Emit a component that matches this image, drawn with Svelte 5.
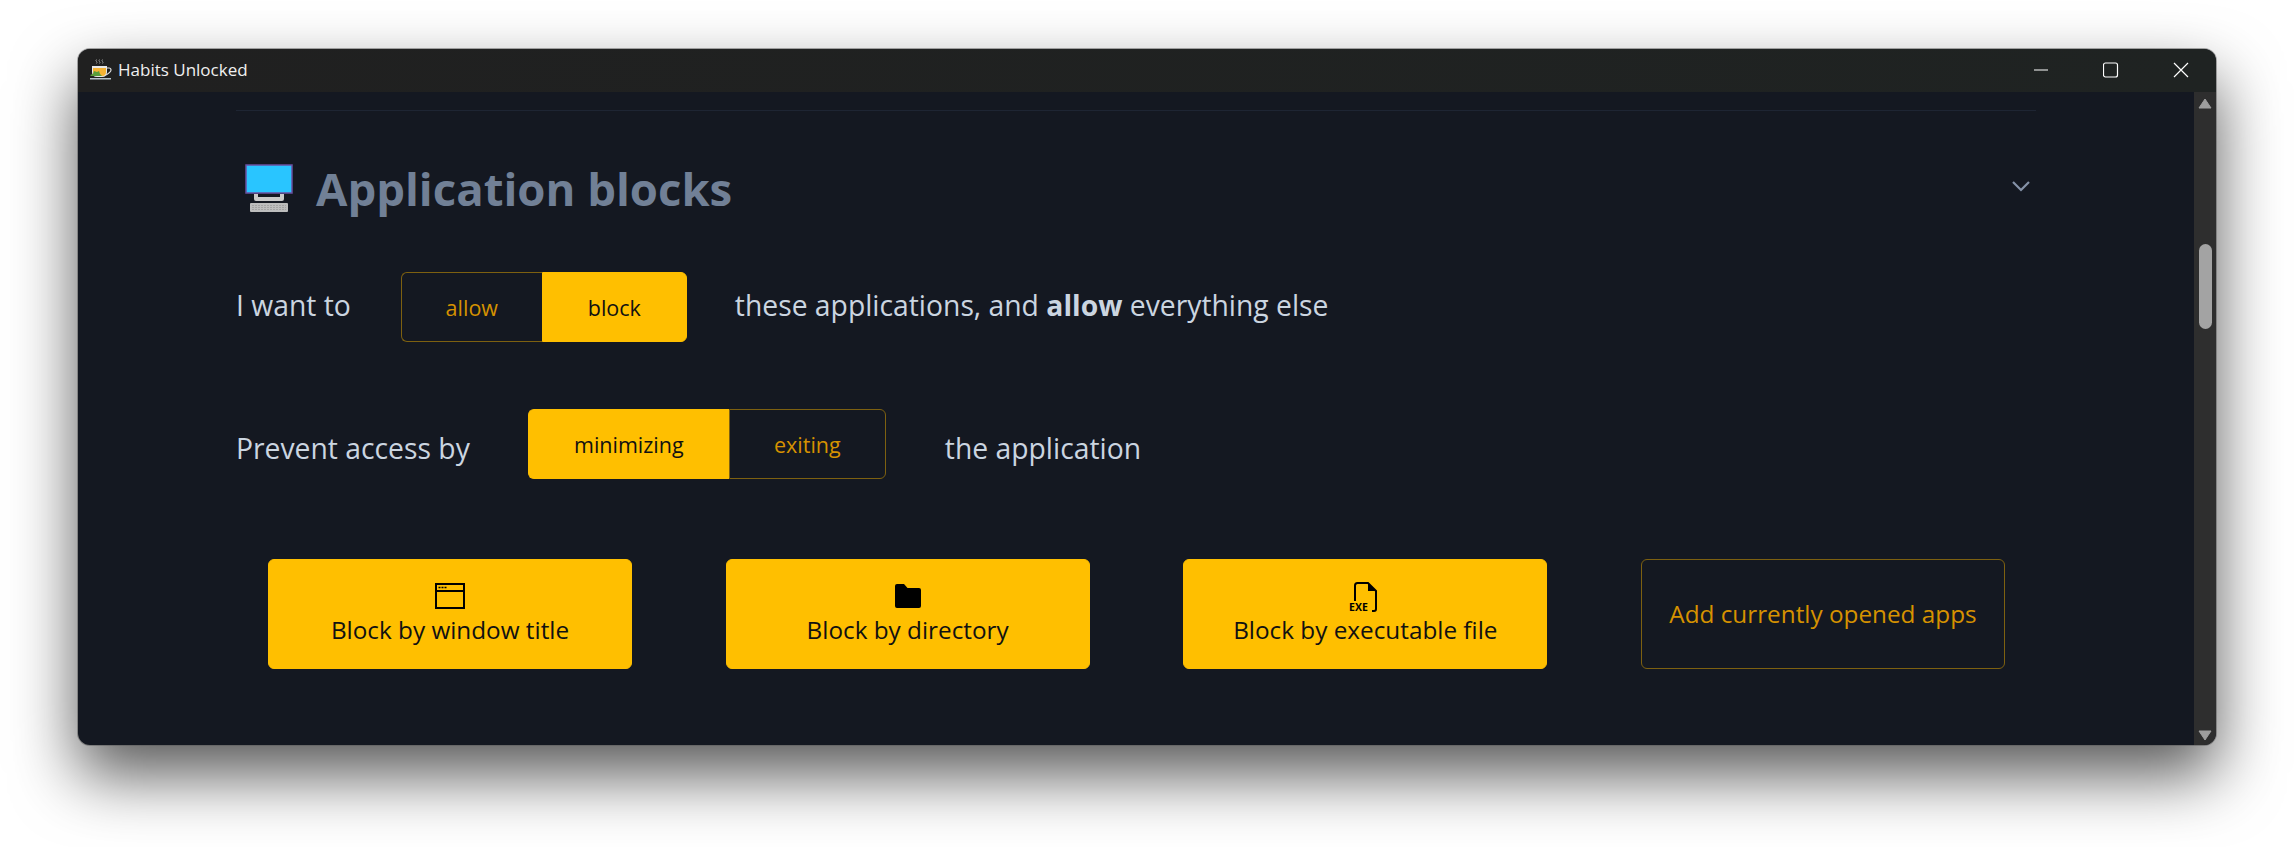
<script>
  let mode = $state('block');
  let prevent = $state('minimizing');

  const actions = [
    { label: 'Block by window title', icon: 'window' },
    { label: 'Block by directory', icon: 'folder' },
    { label: 'Block by executable file', icon: 'exe' }
  ];
</script>

<div class="page">
  <div class="window">
    <header class="titlebar">
      <div class="app-title">
        <svg class="cup" width="24" height="24" viewBox="0 0 24 24">
          <path d="M7.500 1.500q-1 1 0 2t0 2M10.500 1.500q-1 1 0 2t0 2M13.500 1.500q-1 1 0 2t0 2" fill="none" stroke="#aaa" stroke-width="0.8" />
          <path d="M3 8h15v6q0 5-5 5H8q-5 0-5-5z" fill="#e8e8e8" />
          <path d="M4 10h13v4q0 4-4 4H8q-4 0-4-4z" fill="#f5b335" />
          <path d="M18 10h2q2 0 2 2t-5 5" fill="none" stroke="#ddd" stroke-width="1.200" />
          <path d="M1 17l3-1 1-3 3 1 2-1 1 3 2 2H2z" fill="#5a9e3a" />
          <rect x="1" y="20" width="21" height="1.500" fill="#b8c4cc" />
        </svg>
        <span>Habits Unlocked</span>
      </div>
      <div class="controls">
        <button class="ctl" aria-label="Minimize">
          <svg width="16" height="16" viewBox="0 0 16 16"><path d="M1 8h14" stroke="#fff" stroke-width="1.200" /></svg>
        </button>
        <button class="ctl" aria-label="Maximize">
          <svg width="16" height="16" viewBox="0 0 16 16"><rect x="0.500" y="1" width="14" height="14" rx="2" fill="none" stroke="#fff" stroke-width="1.200" /></svg>
        </button>
        <button class="ctl" aria-label="Close">
          <svg width="16" height="16" viewBox="0 0 16 16"><path d="M1 1l14 14M15 1L1 15" stroke="#fff" stroke-width="1.200" /></svg>
        </button>
      </div>
    </header>

    <div class="body">
      <main class="content">
        <div class="inner">
          <hr />
          <div class="section-head">
            <h2>
              <svg class="pc" width="50" height="52" viewBox="0 0 50 52">
                <rect x="2" y="2" width="46" height="28" fill="#29c5ff" stroke="#6a4fa0" stroke-width="1.500" />
                <path d="M10 31v5q0 2 2 2h26q2 0 2-2v-5h-4v3H14v-3z" fill="#c9c9c9" />
                <rect x="6" y="40" width="38" height="9" rx="1" fill="#bdbdbd" />
                <path d="M8 42.500h34M8 44.500h34M8 46.500h34" stroke="#9c9c9c" stroke-width="0.800" stroke-dasharray="2 1" />
              </svg>
              Application blocks
            </h2>
            <svg class="chevron" width="20" height="12" viewBox="0 0 20 12">
              <path d="M2 2l8 8 8-8" fill="none" stroke="#8592a8" stroke-width="2.200" />
            </svg>
          </div>

          <div class="row first">
            <span>I want to</span>
            <div class="toggle">
              <button class="seg w-allow" class:on={mode === 'allow'} onclick={() => (mode = 'allow')}>allow</button>
              <button class="seg w-block" class:on={mode === 'block'} onclick={() => (mode = 'block')}>block</button>
            </div>
            <span>these applications, and <b>allow</b> everything else</span>
          </div>

          <div class="row second">
            <span>Prevent access by</span>
            <div class="toggle">
              <button class="seg w-min" class:on={prevent === 'minimizing'} onclick={() => (prevent = 'minimizing')}>minimizing</button>
              <button class="seg w-exit" class:on={prevent === 'exiting'} onclick={() => (prevent = 'exiting')}>exiting</button>
            </div>
            <span>the application</span>
          </div>

          <div class="actions">
            {#each actions as a}
              <button class="action">
                {#if a.icon === 'window'}
                  <svg width="32" height="32" viewBox="0 0 32 32">
                    <rect x="2" y="3" width="28" height="24" fill="none" stroke="#000" stroke-width="2" />
                    <path d="M2 10h28" stroke="#000" stroke-width="2" />
                    <path d="M4.500 6.500h2M7.500 6.500h2M10.500 6.500h2" stroke="#000" stroke-width="1.500" />
                  </svg>
                {:else if a.icon === 'folder'}
                  <svg width="32" height="32" viewBox="0 0 32 32">
                    <path d="M3 5a2 2 0 0 1 2-2h7l3.500 4H27a2 2 0 0 1 2 2v16a2 2 0 0 1-2 2H5a2 2 0 0 1-2-2z" fill="#000" />
                  </svg>
                {:else}
                  <svg width="32" height="32" viewBox="0 0 32 32">
                    <path d="M6 20V4.500q0-2.500 2.500-2.500H19l8 8v18q0 2-2 2h-2" fill="none" stroke="#000" stroke-width="2" />
                    <path d="M19 2l8 8h-8z" fill="#000" />
                    <text x="9.500" y="30" class="exe" text-anchor="middle">EXE</text>
                  </svg>
                {/if}
                <span>{a.label}</span>
              </button>
            {/each}
            <button class="action outline">Add currently opened apps</button>
          </div>
        </div>
      </main>

      <aside class="scrollbar">
        <svg width="14" height="11" viewBox="0 0 14 11"><path d="M7 1l6 9H1z" fill="#9e9e9e" stroke="#9e9e9e" stroke-linejoin="round" /></svg>
        <div class="track"><div class="thumb"></div></div>
        <svg width="14" height="11" viewBox="0 0 14 11"><path d="M7 10l6-9H1z" fill="#9e9e9e" stroke="#9e9e9e" stroke-linejoin="round" /></svg>
      </aside>
    </div>
  </div>
</div>

<style>
  :global(body) {
    margin: 0;
    background: #fff;
    font-family: "Open Sans", "Noto Sans", sans-serif;
    overflow: hidden;
  }

  .page {
    height: 847px;
    box-sizing: border-box;
    padding: 49px 79px 0 78px;
    overflow: hidden;
  }

  .window {
    height: 696px;
    display: flex;
    flex-direction: column;
    border-radius: 12px;
    overflow: hidden;
    background: #141821;
    box-shadow: 0 0 0 1px rgba(90, 90, 90, 0.5), 0 30px 65px rgba(0, 0, 0, 0.66);
  }

  .titlebar {
    height: 43px;
    flex: none;
    display: flex;
    justify-content: space-between;
    align-items: center;
    background: linear-gradient(90deg, #202020, #1f2322);
  }

  .app-title {
    display: flex;
    align-items: center;
    gap: 5px;
    padding-left: 11px;
    color: #f0f0f0;
    font-size: 17px;
    margin-top: -2px;
  }

  .controls {
    display: flex;
  }

  .ctl {
    width: 70px;
    height: 43px;
    padding: 0 0 2px;
    border: 0;
    background: none;
    display: flex;
    align-items: center;
    justify-content: center;
  }

  .body {
    flex: 1;
    display: flex;
    min-height: 0;
  }

  .content {
    flex: 1;
    padding-left: 158px;
  }

  .inner {
    width: 1800px;
  }

  hr {
    margin: 18px 0 0;
    border: 0;
    border-top: 1px solid #1e2533;
  }

  .section-head {
    display: flex;
    justify-content: space-between;
    align-items: center;
    height: 156px;
    padding: 0 5px 0 8px;
  }

  .chevron {
    margin-bottom: 6px;
  }

  h2 {
    margin: 0 0 3px;
    display: flex;
    align-items: center;
    gap: 22px;
    font-size: 45.5px;
    font-weight: 700;
    color: #718096;
  }

  .pc {
    margin-top: 2px;
  }

  .row {
    display: flex;
    align-items: center;
    color: #cbd5e0;
    font-size: 28.3px;
  }

  .row.first {
    margin-top: 5px;
  }

  .row.first > span {
    margin-bottom: 4px;
  }

  .row.first .toggle {
    margin: 0 48px 0 50px;
  }

  .row.second {
    margin-top: 67px;
  }

  .row.second > span {
    margin-top: 8px;
  }

  .row.second .toggle {
    margin: 0 59px 0 58px;
  }

  .toggle {
    display: flex;
    height: 70px;
  }

  .seg {
    height: 100%;
    padding: 0;
    font: inherit;
    font-size: 21.5px;
    color: #d69200;
    background: transparent;
    border: 1px solid #7d6010;
  }

  .seg:first-child {
    border-radius: 6px 0 0 6px;
    border-right: 0;
  }

  .seg:last-child {
    border-radius: 0 6px 6px 0;
    border-left: 1px solid #7d6010;
  }

  .seg.on {
    background: #ffbf00;
    color: #111;
    border-color: #ffbf00;
  }

  .w-allow { width: 141px; }
  .w-block { width: 145px; }
  .w-min { width: 201px; }
  .w-exit { width: 157px; }

  .actions {
    display: flex;
    justify-content: space-between;
    margin: 80px 31px 0 32px;
  }

  .action {
    width: 364px;
    height: 110px;
    padding: 0 0 2px;
    display: flex;
    flex-direction: column;
    align-items: center;
    justify-content: center;
    font: inherit;
    font-size: 24.3px;
    color: #111;
    background: #ffbf00;
    border: 1px solid #ffbf00;
    border-radius: 6px;
  }

  .action svg {
    display: block;
    flex: none;
  }

  .action.outline {
    color: #d69200;
    background: transparent;
    border-color: #7d6010;
  }

  .exe {
    font-size: 10.500px;
    font-weight: 700;
    fill: #000;
  }

  .scrollbar {
    width: 22px;
    flex: none;
    display: flex;
    flex-direction: column;
    align-items: center;
    justify-content: space-between;
    padding: 6px 0 4px;
    box-sizing: border-box;
    background: #2e2e2e;
  }

  .track {
    flex: 1;
    width: 100%;
    display: flex;
    justify-content: center;
    padding-top: 135px;
  }

  .thumb {
    width: 13px;
    height: 85px;
    border-radius: 7px;
    background: #a3a3a3;
  }
</style>
